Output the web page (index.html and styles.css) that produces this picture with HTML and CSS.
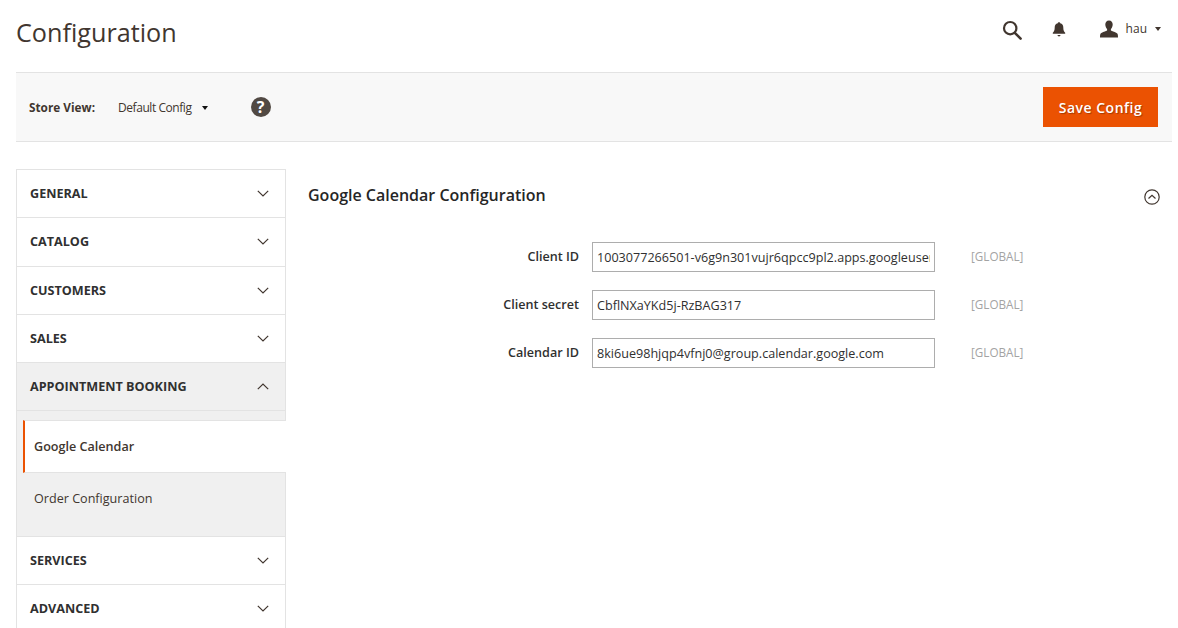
FILE: index.html
```html
<!DOCTYPE html>
<html lang="en">
<head>
<meta charset="utf-8">
<title>Configuration</title>
<link rel="stylesheet" href="styles.css">
</head>
<body>
<div class="page">
  <header class="top">
    <h1 class="title">Configuration</h1>
    <div class="actions">
      <svg class="icon-search" viewBox="0 0 20 20" width="20" height="20"><circle cx="8.2" cy="8.2" r="6.2" fill="none" stroke="#41362f" stroke-width="2.2"/><path d="M12.8 12.8 L18.6 18.6" stroke="#41362f" stroke-width="2.6" stroke-linecap="round"/></svg>
      <svg class="icon-bell" viewBox="0 0 16 16" width="16" height="16"><path d="M8 1.2c.7 0 1.2.4 1.2 1 2.2.5 3.1 2.2 3.1 4.4 0 2.4.5 4 1.9 5.2v.9H1.8v-.9c1.4-1.2 1.9-2.8 1.9-5.2 0-2.2.9-3.900 3.100-4.400 0-.6.5-1 1.200-1z" fill="#41362f"/><path d="M6.500 14.100h3c0 .8-.7 1.300-1.500 1.300s-1.500-.5-1.500-1.300z" fill="#41362f"/></svg>
      <div class="user">
        <svg class="icon-user" viewBox="0 0 18 18" width="18" height="18"><path d="M9 0.500c2.400 0 3.700 1.700 3.700 4 0 1.800-.8 3.600-1.800 4.500v1.500c.7.700 5.600 1.700 6.600 3.300.4.700.500 2.200.500 3.700H0c0-1.500.1-3 .5-3.700 1-1.600 5.900-2.600 6.600-3.300V9C6.100 8.100 5.300 6.300 5.300 4.500c0-2.300 1.300-4 3.700-4z" fill="#41362f"/></svg>
        <span class="user-name">hau</span>
        <span class="caret caret-user"></span>
      </div>
    </div>
  </header>

  <div class="toolbar">
    <div class="scope">
      <span class="scope-label">Store View:</span>
      <span class="scope-value">Default Config</span>
      <span class="caret caret-scope"></span>
      <span class="help">?</span>
    </div>
    <button class="save" type="button">Save Config</button>
  </div>

  <div class="columns">
    <nav class="side">
      <div class="tab"><span>GENERAL</span><svg class="chev" viewBox="0 0 12 7"><path d="M.8.8 6 6 11.200.8"/></svg></div>
      <div class="tab tab-b"><span>CATALOG</span><svg class="chev" viewBox="0 0 12 7"><path d="M.8.8 6 6 11.200.8"/></svg></div>
      <div class="tab"><span>CUSTOMERS</span><svg class="chev" viewBox="0 0 12 7"><path d="M.8.8 6 6 11.200.8"/></svg></div>
      <div class="tab"><span>SALES</span><svg class="chev" viewBox="0 0 12 7"><path d="M.8.8 6 6 11.200.8"/></svg></div>
      <div class="tab tab-open"><span>APPOINTMENT BOOKING</span><svg class="chev" viewBox="0 0 12 7"><path d="M.8 6.200 6 1l5.200 5.200"/></svg></div>
      <div class="subs">
        <div class="sub-gap"></div>
        <a class="sub sub-active">Google Calendar</a>
        <a class="sub sub-plain">Order Configuration</a>
      </div>
      <div class="tab"><span>SERVICES</span><svg class="chev" viewBox="0 0 12 7"><path d="M.8.8 6 6 11.200.8"/></svg></div>
      <div class="tab"><span>ADVANCED</span><svg class="chev" viewBox="0 0 12 7"><path d="M.8.8 6 6 11.200.8"/></svg></div>
    </nav>

    <main class="content">
      <div class="section-head">
        <h2 class="section-title">Google Calendar Configuration</h2>
        <svg class="collapse" viewBox="0 0 16 16" width="16" height="16"><circle cx="8" cy="8" r="7.200" fill="none" stroke="#41362f" stroke-width="1.200"/><path d="M4.500 9.500 8 6.200l3.500 3.300" fill="none" stroke="#41362f" stroke-width="1.200"/></svg>
      </div>
      <div class="form">
        <div class="row">
          <label class="label">Client ID</label>
          <input class="field" type="text" value="1003077266501-v6g9n301vujr6qpcc9pl2.apps.googleusercontent.com">
          <span class="scope-note">[GLOBAL]</span>
        </div>
        <div class="row">
          <label class="label">Client secret</label>
          <input class="field" type="text" value="CbflNXaYKd5j-RzBAG317">
          <span class="scope-note">[GLOBAL]</span>
        </div>
        <div class="row">
          <label class="label">Calendar ID</label>
          <input class="field" type="text" value="8ki6ue98hjqp4vfnj0@group.calendar.google.com">
          <span class="scope-note">[GLOBAL]</span>
        </div>
      </div>
    </main>
  </div>
</div>
</body>
</html>
```
FILE: styles.css
```css
* { box-sizing: border-box; }
html, body { margin: 0; padding: 0; height: 100%; overflow: hidden; background: #fff; }
body { font-family: "Open Sans", sans-serif; color: #303030; font-size: 14px; }
.page { width: 1178px; height: 628px; padding: 0 6px 0 16px; overflow: hidden; }

.top { height: 72px; display: flex; justify-content: space-between; }
.title { margin: 14px 0 0; font-size: 25.200px; line-height: 36px; font-weight: 400; color: #41362f; }
.actions { display: flex; align-items: flex-start; padding-top: 20px; }
.icon-search { margin-right: 29px; }
.icon-bell { margin-top: 1px; margin-right: 33px; }
.user { display: flex; align-items: flex-start; }
.user-name { font-size: 12px; line-height: 18px; margin-left: 8px; color: #41362f; }
.caret { width: 0; height: 0; border-style: solid; border-width: 4px 3.500px 0; border-color: #41362f transparent transparent; display: block; }
.caret-user { margin: 7px 11px 0 8px; }

.toolbar { height: 70px; background: #f8f8f8; border-top: 1px solid #e3e3e3; border-bottom: 1px solid #e3e3e3; display: flex; align-items: center; justify-content: space-between; padding: 0 14px 0 13px; }
.scope { display: flex; align-items: center; }
.scope-label { font-size: 11.800px; font-weight: 700; color: #41362f; width: 89px; }
.scope-value { font-size: 12px; letter-spacing: -.44px; color: #41362f; }
.caret-scope { margin: 2px 0 0 10px; border-color: #111 transparent transparent; }
.help { width: 20px; height: 20px; border-radius: 50%; background: #514943; color: #fff; font-weight: 700; font-size: 16px; line-height: 20px; text-align: center; margin: 0 0 0 43px; }
.save { width: 115px; height: 40px; background: #eb5202; color: #fff; border: 0; font-family: "Open Sans", sans-serif; font-size: 14px; font-weight: 600; letter-spacing: .5px; text-shadow: 1px 1px 1px rgba(0,0,0,.3); padding: 0; }

.columns { display: flex; padding-top: 27px; }
.side { width: 270px; flex: none; border-top: 1px solid #e3e3e3; }
.tab { height: 48.300px; border: 1px solid #e3e3e3; border-top: 0; display: flex; align-items: center; justify-content: space-between; padding: 0 16px 0 13px; font-size: 12.620px; font-weight: 700; color: #303030; }
.tab-open { background: #f0f0f0; }
.chev { width: 12px; height: 7px; fill: none; stroke: #41362f; stroke-width: 1.200; display: block; }
.subs { background: #f0f0f0; border-left: 1px solid #e3e3e3; border-bottom: 1px solid #e3e3e3; height: 125.500px; display: flex; flex-direction: column; }
.sub-gap { height: 8.500px; flex: none; border-right: 1px solid #e3e3e3; }
.sub { font-size: 12.600px; color: #41362f; display: block; padding-left: 17px; }
.sub-active { height: 53px; flex: none; line-height: 50px; padding-top: 1px; background: #fff; margin-left: 6px; padding-left: 9px; border-left: 2px solid #eb5202; border-top: 1px solid #e3e3e3; border-bottom: 1px solid #e3e3e3; font-weight: 600; width: 263px; }
.sub-plain { line-height: 52px; border-right: 1px solid #e3e3e3; flex: 1; }

.content { flex: 1; padding-left: 22px; }
.section-head { display: flex; justify-content: space-between; align-items: center; height: 54px; padding-right: 12px; }
.section-title { margin: 0 0 2px; font-size: 16px; font-weight: 600; color: #262626; line-height: 52px; }
.collapse { margin-top: 1px; }
.form { padding-top: 19px; display: flex; flex-direction: column; gap: 18px; }
.row { display: flex; align-items: center; height: 30px; }
.label { width: 271px; text-align: right; font-size: 12.600px; font-weight: 600; color: #303030; margin-top: -2px; }
.field { width: 343px; height: 30px; margin-left: 13px; border: 1px solid #adadad; padding: 0 4px; font-family: "Open Sans", sans-serif; font-size: 12.600px; color: #303030; background: #fff; outline: 0; border-radius: 0; }
.scope-note { margin-left: 36px; font-size: 11.700px; color: #a3a3a3; margin-top: -2px; }
```
